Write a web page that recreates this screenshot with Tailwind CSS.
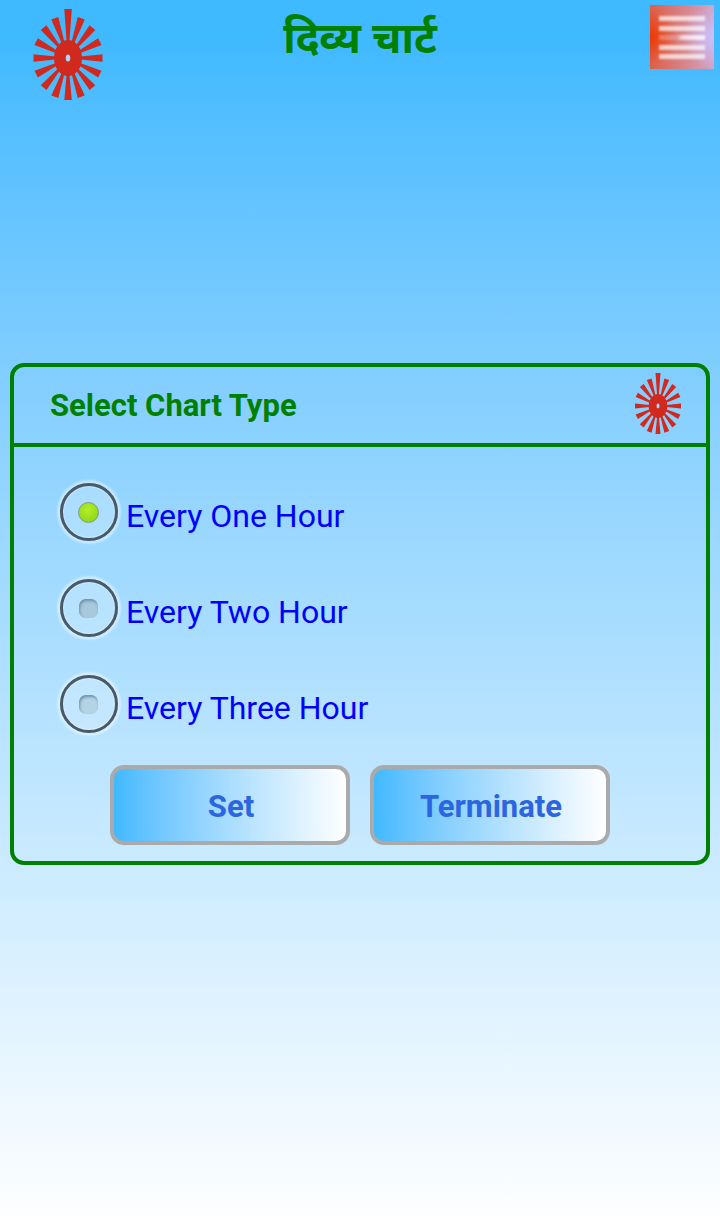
<!DOCTYPE html>
<html lang="hi">
<head>
    <meta charset="UTF-8">
    <meta name="viewport" content="width=device-width, initial-scale=1.0">
    <title>Divya Chart</title>
    <script src="https://cdn.jsdelivr.net/npm/@tailwindcss/browser@4"></script>
</head>
<body class="w-[720px] h-[1229px] overflow-hidden bg-gradient-to-b from-[#3fb9ff] from-[3%] to-[#ffffff] font-['Roboto',sans-serif]">

    <!-- top bar -->
    <div class="h-[363px] px-[6px] pt-[5px] grid grid-cols-[1fr_auto_1fr] items-start">
        <div class="pl-[27px] pt-[4px]">
            <svg id="logoBig" class="block blur-[0.4px]" width="70" height="92" viewBox="0 0 70 92"></svg>
        </div>
        <h1 class="pt-[2px] text-[#008000] text-[42.5px] leading-[60px] font-bold font-['Noto_Sans','Noto_Sans_Devanagari','DejaVu_Sans',sans-serif]">दिव्य चार्ट</h1>
        <div class="relative justify-self-end w-[64px] h-[64px] flex flex-col gap-[4.5px] pt-[11px] pl-[9px] bg-[radial-gradient(circle_at_100%_50%,#c8c0ff_0%,#c8c0ff00_45%),radial-gradient(circle_at_0%_50%,#ee3a08_0%,#ee3a0800_40%),linear-gradient(to_right,#dd5f45,#d2a4c6)]">
            <span class="block w-[46px] h-[5px] bg-white/70 blur-[1px]"></span>
            <span class="block w-[46px] h-[5px] bg-white/70 blur-[1px]"></span>
            <span class="block w-[46px] h-[5px] bg-[linear-gradient(to_right,#ffffff40,#ffffff40_40%,#ffffffb0_50%,#ffffffd0)] blur-[1px]"></span>
            <span class="block w-[46px] h-[5px] bg-white/70 blur-[1px]"></span>
            <span class="block w-[46px] h-[5px] bg-white/70 blur-[1px]"></span>
        </div>
    </div>

    <!-- chart type card -->
    <div class="mx-[10px] h-[502px] border-4 border-[#008000] rounded-[14px]">
        <div class="h-[80px] border-b-4 border-[#008000] flex items-center justify-between pl-[36px] pr-[24px]">
            <h2 class="text-[#008000] text-[31px] font-bold leading-none">Select Chart Type</h2>
            <svg id="logoSmall" class="block -mt-[2px] blur-[0.3px]" width="48" height="62" viewBox="0 0 48 62"></svg>
        </div>

        <div class="pt-[36px] pl-[46px] flex flex-col gap-[38px]">
            <label class="flex items-start h-[58px]">
                <span class="w-[58px] h-[58px] shrink-0 rounded-full border-[3px] border-[#4a5a66] bg-white/20 shadow-[0_0_2px_3px_#ffffff70,inset_0_0_1px_1px_#ffffff50] flex items-center justify-center">
                    <span class="w-[21px] h-[21px] -ml-[1px] rounded-full border border-[#7f9a80] bg-[radial-gradient(circle_at_45%_35%,#b4ee28,#86d018)]"></span>
                </span>
                <span class="ml-[8px] mt-[14px] text-[#0000ff] text-[32px] leading-[38px]">Every One Hour</span>
            </label>
            <label class="flex items-start h-[58px]">
                <span class="w-[58px] h-[58px] shrink-0 rounded-full border-[3px] border-[#4a5a66] bg-white/20 shadow-[0_0_2px_3px_#ffffff70,inset_0_0_1px_1px_#ffffff50] flex items-center justify-center">
                    <span class="w-[19px] h-[19px] -ml-[1px] rounded-[7px] bg-[#a8c8dc] shadow-[inset_1px_2px_3px_#6f8fa8]"></span>
                </span>
                <span class="ml-[8px] mt-[14px] text-[#0000ff] text-[32px] leading-[38px]">Every Two Hour</span>
            </label>
            <label class="flex items-start h-[58px]">
                <span class="w-[58px] h-[58px] shrink-0 rounded-full border-[3px] border-[#4a5a66] bg-white/20 shadow-[0_0_2px_3px_#ffffff70,inset_0_0_1px_1px_#ffffff50] flex items-center justify-center">
                    <span class="w-[19px] h-[19px] -ml-[1px] rounded-[7px] bg-[#b4d4e6] shadow-[inset_1px_2px_3px_#6f8fa8]"></span>
                </span>
                <span class="ml-[8px] mt-[14px] text-[#0000ff] text-[32px] leading-[38px]">Every Three Hour</span>
            </label>
        </div>

        <div class="mt-[32px] flex justify-center gap-[20px]">
            <button class="w-[240px] h-[80px] pl-[2px] pt-[4px] border-4 border-[#aaaaaa] rounded-[14px] bg-gradient-to-r from-[#3fb9ff] to-[#ffffff] text-[#2b66e0] text-[31px] font-bold">Set</button>
            <button class="w-[240px] h-[80px] pl-[2px] pt-[4px] border-4 border-[#aaaaaa] rounded-[14px] bg-gradient-to-r from-[#3fb9ff] to-[#ffffff] text-[#2b66e0] text-[31px] font-bold">Terminate</button>
        </div>
    </div>

    <script>
        // sun: 16 tapered rays round an oval hub, top ray sticks out further
        function drawSun(id, cx, cy, rx, top, bottom, peak, hubX, hubY, wide) {
            let out = '';
            for (let i = 0; i < 16; i++) {
                const a = i * Math.PI / 8;
                const sin = Math.sin(a), cos = Math.cos(a);
                const ry = i === 0 ? peak : (cos > 0 ? top : bottom);
                const ox = sin * rx, oy = -cos * ry;
                const ix = sin * hubX * 0.9, iy = -cos * hubY * 0.9;
                const len = Math.hypot(ox - ix, oy - iy);
                const nx = -(oy - iy) / len, ny = (ox - ix) / len;
                const pts = [
                    [cx + ix + nx * wide * 0.18, cy + iy + ny * wide * 0.18],
                    [cx + ox + nx * wide / 2, cy + oy + ny * wide / 2],
                    [cx + ox - nx * wide / 2, cy + oy - ny * wide / 2],
                    [cx + ix - nx * wide * 0.18, cy + iy - ny * wide * 0.18]
                ];
                out += `<polygon fill="#d2291e" points="${pts.map(p => p.map(v => v.toFixed(1)).join(',')).join(' ')}"/>`;
            }
            out += `<ellipse cx="${cx}" cy="${cy}" rx="${hubX}" ry="${hubY}" fill="#d2291e"/>`;
            out += `<ellipse cx="${cx}" cy="${cy}" rx="${hubX * 0.16}" ry="${hubY * 0.2}" fill="#a8d8f8"/>`;
            document.getElementById(id).innerHTML = out;
        }
        drawSun('logoBig', 35, 49, 34.5, 43, 42, 49, 14, 18, 7.5);
        drawSun('logoSmall', 24, 33, 23, 29, 28, 33, 9.5, 12, 5);
    </script>
</body>
</html>
